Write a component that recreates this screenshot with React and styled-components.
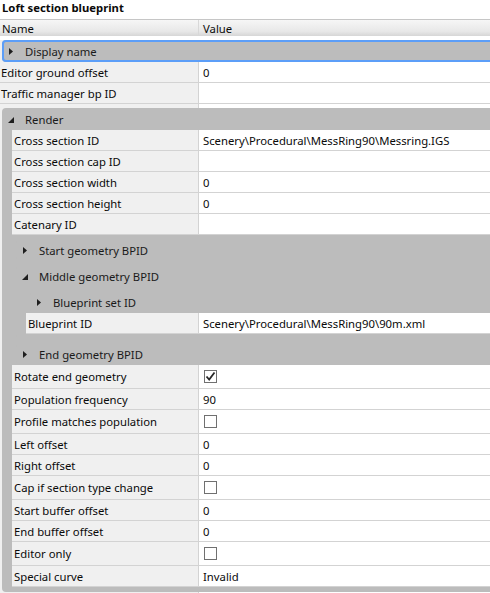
import React from "react";
import styled, { createGlobalStyle, css } from "styled-components";

const NAME_EDGE = 199;

const GlobalStyle = createGlobalStyle`
  html, body {
    margin: 0;
    padding: 0;
    background: #ffffff;
    overflow: hidden;
  }
  body {
    font-family: "Noto Sans", "Open Sans", sans-serif;
    font-size: 11.3px;
    color: #0a0a0a;
  }
`;

const Panel = styled.div`
  width: 496px;
  height: 593px;
  overflow: hidden;
`;

const Title = styled.div`
  height: 19px;
  padding-left: 2px;
  font-weight: 700;
  font-size: 11.3px;
  line-height: 16px;
`;

const HeaderRow = styled.div`
  display: grid;
  grid-template-columns: ${NAME_EDGE}px 1fr;
  height: 16px;
  border-top: 1px solid #c6c6c6;
  background: linear-gradient(#f6f6f6, #e8e8e8 70%, #d6d6d6);
`;

const HeaderCell = styled.div`
  display: flex;
  align-items: center;
  padding-left: ${(p) => (p.$value ? 4 : 2)}px;
  padding-top: 1px;
  border-right: ${(p) => (p.$value ? "none" : "1px solid #d8d8d8")};
`;

/* name column is light grey, value column white, under every row */
const Body = styled.div`
  min-height: 560px;
  background: linear-gradient(
    to right,
    #f0f0f0 0 ${NAME_EDGE - 1}px,
    #d3d3d3 ${NAME_EDGE - 1}px ${NAME_EDGE}px,
    #ffffff ${NAME_EDGE}px
  );
`;

const Group = styled.div`
  margin-top: 4px;
  margin-left: ${(p) => p.$inset}px;
  background: #bcbcbc;
  border-radius: 4px 0 0 4px;
  padding-bottom: ${(p) => (p.$open ? 5 : 0)}px;
  ${(p) =>
    p.$focused &&
    css`
      box-shadow: inset 0 0 0 2px #5c9ef8;
    `}
`;

const GroupHeader = styled.div`
  display: flex;
  align-items: center;
  height: 22px;
  color: #1a1a1a;
`;

const ArrowBox = styled.span`
  display: flex;
  align-items: center;
  width: 23px;
  padding-left: ${(p) => (p.$open ? 6 : 7)}px;
  padding-top: ${(p) => (p.$open ? 2 : 0)}px;
  box-sizing: border-box;
`;

const GroupBody = styled.div`
  padding-left: 10px;
`;

const Row = styled.div`
  display: grid;
  grid-template-columns: ${(p) => NAME_EDGE - p.$left}px 1fr;
  height: ${(p) => (p.$tall ? 23 : 20)}px;
  border-bottom: 1px solid #d3d3d3;
`;

const NameCell = styled.div`
  display: flex;
  align-items: center;
  padding-left: ${(p) => (p.$left === 0 ? 1 : 2)}px;
  background: #f0f0f0;
  border-right: 1px solid #d3d3d3;
  white-space: nowrap;
  overflow: hidden;
`;

const ValueCell = styled.div`
  display: flex;
  align-items: center;
  padding-left: 4px;
  background: #ffffff;
  white-space: nowrap;
`;

const Box = styled.span`
  display: flex;
  align-items: center;
  justify-content: center;
  width: 13px;
  height: 13px;
  margin-left: 1px;
  border: 1px solid #707070;
  background: #ffffff;
  box-sizing: border-box;
`;

const Arrow = ({ open }) =>
  open ? (
    <svg width="6" height="6" viewBox="0 0 6 6">
      <polygon points="6,0 6,6 0,6" fill="#1e1e1e" />
    </svg>
  ) : (
    <svg width="4" height="7" viewBox="0 0 4 7">
      <polygon points="0,0 4,3.5 0,7" fill="#1e1e1e" />
    </svg>
  );

const Check = ({ checked }) => (
  <Box>
    {checked && (
      <svg width="11" height="11" viewBox="0 0 11 11">
        <path d="M1.5 5.5 L4.2 8.5 L9.5 1.5" fill="none" stroke="#262626" strokeWidth="1.8" />
      </svg>
    )}
  </Box>
);

const tree = [
  { group: "Display name", focused: true },
  { name: "Editor ground offset", value: "0" },
  { name: "Traffic manager bp ID", value: "" },
  {
    group: "Render",
    children: [
      { name: "Cross section ID", value: "Scenery\\Procedural\\MessRing90\\Messring.IGS" },
      { name: "Cross section cap ID", value: "" },
      { name: "Cross section width", value: "0" },
      { name: "Cross section height", value: "0" },
      { name: "Catenary ID", value: "" },
      { group: "Start geometry BPID" },
      {
        group: "Middle geometry BPID",
        children: [
          { group: "Blueprint set ID" },
          { name: "Blueprint ID", value: "Scenery\\Procedural\\MessRing90\\90m.xml" },
        ],
      },
      { group: "End geometry BPID" },
      { name: "Rotate end geometry", check: true },
      { name: "Population frequency", value: "90" },
      { name: "Profile matches population", check: false },
      { name: "Left offset", value: "0" },
      { name: "Right offset", value: "0" },
      { name: "Cap if section type change", check: false },
      { name: "Start buffer offset", value: "0" },
      { name: "End buffer offset", value: "0" },
      { name: "Editor only", check: false },
      { name: "Special curve", value: "Invalid" },
    ],
  },
];

const Items = ({ items, left }) =>
  items.map((item) => {
    if (item.group) {
      const inset = left === 0 ? 2 : 4;
      const open = Boolean(item.children);
      return (
        <Group key={item.group} $inset={inset} $open={open} $focused={item.focused}>
          <GroupHeader>
            <ArrowBox $open={open}>
              <Arrow open={open} />
            </ArrowBox>
            {item.group}
          </GroupHeader>
          {open && (
            <GroupBody>
              <Items items={item.children} left={left + inset + 10} />
            </GroupBody>
          )}
        </Group>
      );
    }
    const isCheck = item.check !== undefined;
    return (
      <Row key={item.name} $left={left} $tall={isCheck}>
        <NameCell $left={left}>{item.name}</NameCell>
        <ValueCell>{isCheck ? <Check checked={item.check} /> : item.value}</ValueCell>
      </Row>
    );
  });

export default function App() {
  return (
    <>
      <GlobalStyle />
      <Panel>
        <Title>Loft section blueprint</Title>
        <HeaderRow>
          <HeaderCell>Name</HeaderCell>
          <HeaderCell $value>Value</HeaderCell>
        </HeaderRow>
        <Body>
          <Items items={tree} left={0} />
        </Body>
      </Panel>
    </>
  );
}
